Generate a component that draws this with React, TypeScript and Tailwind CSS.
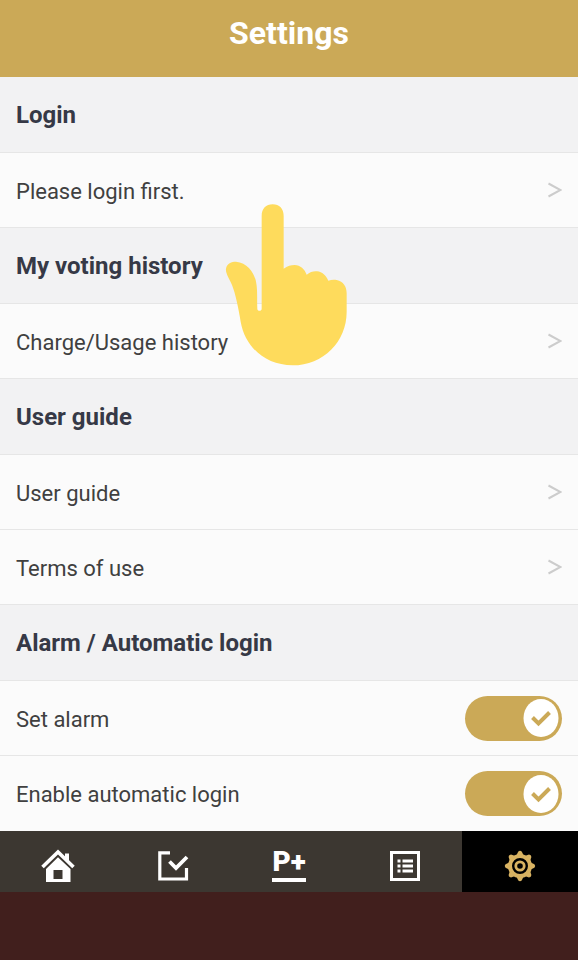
import { useState } from "react";
import type { ReactNode } from "react";

function SectionHeading({ children }: { children: ReactNode }) {
  return (
    <h2 className="flex h-[76px] items-center border-b border-[#e6e6e6] bg-[#f2f2f3] px-4 text-2xl font-bold text-[#363946]">
      {children}
    </h2>
  );
}

function LinkRow({ children }: { children: ReactNode }) {
  return (
    <a
      href="#"
      className="flex h-[75px] items-center justify-between border-b border-[#e6e6e6] bg-[#fbfbfb] px-4 text-[22px] text-[#404040]"
    >
      <span className="pt-0.5">{children}</span>
      <svg width="14" height="16" viewBox="0 0 14 16" fill="none" stroke="#cccccc" strokeWidth="2" aria-hidden="true">
        <path d="M0.5 1.5 L12.5 8 L0.5 14.5" />
      </svg>
    </a>
  );
}

function ToggleRow({ id, children }: { id: string; children: ReactNode }) {
  const [on, setOn] = useState(true);
  return (
    <div className="flex h-[75px] items-center justify-between border-b border-[#e6e6e6] bg-[#fbfbfb] px-4 text-[22px] text-[#404040] last:border-b-0">
      <label htmlFor={id} className="pt-0.5">
        {children}
      </label>
      <span className="grid h-[45px] w-[97px]">
        <input
          id={id}
          type="checkbox"
          checked={on}
          onChange={(e) => setOn(e.target.checked)}
          className="peer col-start-1 row-start-1 h-full w-full appearance-none rounded-full bg-[#c4c4c4] checked:bg-[#cba957]"
        />
        <svg
          viewBox="0 0 36 38"
          aria-hidden="true"
          className="pointer-events-none col-start-1 row-start-1 mx-[3px] h-[38px] w-9 self-center justify-self-start peer-checked:justify-self-end"
        >
          <ellipse cx="18" cy="19" rx="17.5" ry="19" fill="#fff" />
          <path d="M9.5 18.5 L15.5 24.5 L26.5 13.5" fill="none" stroke="#cba957" strokeWidth="4" />
        </svg>
      </span>
    </div>
  );
}

function HomeIcon() {
  return (
    <svg width="34" height="34" viewBox="0 0 34 34" fill="none" aria-hidden="true">
      <path d="M1.5 18 L17 3 L32.5 18" stroke="#fff" strokeWidth="3.6" />
      <path d="M24 4.5 H28 V12.5 L24 8.7 Z" fill="#fff" />
      <path fillRule="evenodd" d="M17 8.2 L29.5 20 V33 H5 V20 Z M12.5 21 V30 H21.5 V21 Z" fill="#fff" />
    </svg>
  );
}

function CheckIcon() {
  return (
    <svg width="32" height="32" viewBox="0 0 32 32" fill="none" stroke="#fff" aria-hidden="true">
      <path d="M13 2.8 H2.8 V29 H29.5 V18" strokeWidth="3.2" />
      <path d="M12.5 11.5 L19 18 L30 7" strokeWidth="3.8" />
    </svg>
  );
}

function ListIcon() {
  return (
    <svg width="32" height="32" viewBox="0 0 32 32" fill="none" stroke="#fff" aria-hidden="true">
      <rect x="2.5" y="2.5" width="27" height="27" strokeWidth="3" />
      <path d="M8.5 11 H11.5 M8.5 16 H11.5 M8.5 21 H11.5 M13.5 11 H24 M13.5 16 H24 M13.5 21 H24" strokeWidth="2.8" />
    </svg>
  );
}

function GearIcon() {
  const teeth = [0, 45, 90, 135, 180, 225, 270, 315];
  return (
    <svg width="32" height="32" viewBox="0 0 32 32" fill="none" stroke="#d9b362" aria-hidden="true">
      <circle cx="16" cy="16" r="10" strokeWidth="4" />
      <circle cx="16" cy="16" r="4.2" strokeWidth="2.8" />
      {teeth.map((angle) => (
        <path
          key={angle}
          d="M12 6.2 L14.3 1.6 Q16 0 17.7 1.6 L20 6.2 Z"
          fill="#d9b362"
          stroke="none"
          transform={`rotate(${angle} 16 16)`}
        />
      ))}
    </svg>
  );
}

function PointingHand() {
  return (
    <svg
      viewBox="45 42 369 486"
      aria-hidden="true"
      className="pointer-events-none absolute top-[204px] left-[225px] h-[162px] w-[123px]"
    >
      <path
        fill="#fedb5c"
        d="M155 78 C155 56 168 43 188 43 C208 43 221 56 221 78 V236 C232 228 243 225 254 225 C271 226 284 237 290 254 C300 246 310 243 321 244 C337 246 348 256 355 272 C363 269 372 269 380 270 C400 274 410 290 410 310 V365 C410 455 340 526 248 526 C165 526 105 470 92 395 C86 355 76 310 66 285 C58 265 46 250 48 236 C50 220 65 215 78 215 C110 217 130 245 137 270 C143 295 141 320 142 356 C142 364 155 364 155 356 Z"
      />
    </svg>
  );
}

const tab = "flex h-[61px] items-center justify-center pt-2";

export default function App() {
  return (
    <div className="relative flex min-h-screen flex-col bg-[#411f1d] font-[Roboto,sans-serif]">
      <header className="flex h-[77px] items-center justify-center bg-[#cba957] pb-3">
        <h1 className="text-[32px] font-bold text-white">Settings</h1>
      </header>

      <main>
        <SectionHeading>Login</SectionHeading>
        <LinkRow>Please login first.</LinkRow>
        <SectionHeading>My voting history</SectionHeading>
        <LinkRow>Charge/Usage history</LinkRow>
        <SectionHeading>User guide</SectionHeading>
        <LinkRow>User guide</LinkRow>
        <LinkRow>Terms of use</LinkRow>
        <SectionHeading>Alarm / Automatic login</SectionHeading>
        <ToggleRow id="alarm">Set alarm</ToggleRow>
        <ToggleRow id="auto-login">Enable automatic login</ToggleRow>
      </main>

      <nav className="grid grid-cols-5 bg-[#3c3731]">
        <a href="#" aria-label="Home" className={tab}>
          <HomeIcon />
        </a>
        <a href="#" aria-label="Vote" className={tab}>
          <CheckIcon />
        </a>
        <a href="#" aria-label="Points" className={tab}>
          <span className="border-b-4 border-white pb-1 text-[28px] leading-6 font-black text-white">P+</span>
        </a>
        <a href="#" aria-label="List" className={tab}>
          <ListIcon />
        </a>
        <a href="#" aria-label="Settings" aria-current="page" className="flex h-[61px] items-center justify-center bg-black pt-2">
          <GearIcon />
        </a>
      </nav>

      <PointingHand />
    </div>
  );
}
